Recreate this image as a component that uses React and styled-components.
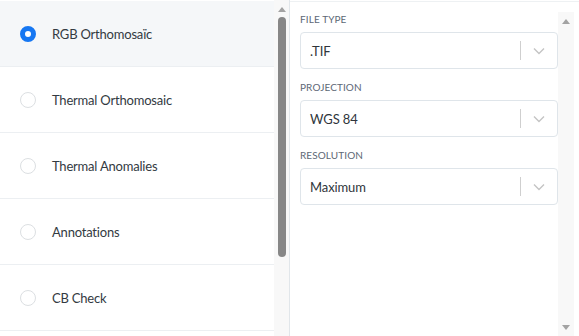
import React, { useState } from "react";
import styled, { createGlobalStyle } from "styled-components";

const GlobalStyle = createGlobalStyle`
  html, body {
    margin: 0;
    padding: 0;
    background: #ffffff;
    font-family: "Lato", "Open Sans", sans-serif;
  }
  * { box-sizing: border-box; }
`;

const Page = styled.div`
  display: flex;
  width: 579px;
  height: 336px;
  overflow: hidden;
  background: #fff;
`;

const LeftPane = styled.div`
  display: flex;
  width: 290px;
  border-right: 1px solid #e1e6ea;
`;

const List = styled.div`
  width: 274px;
  padding-top: 1px;
`;

const Row = styled.div`
  display: flex;
  align-items: center;
  height: 66px;
  padding-left: 20px;
  border-bottom: 1px solid #eceff2;
  background: ${p => (p.$active ? "#f5f7f9" : "#fff")};
  cursor: pointer;
`;

const Radio = styled.span`
  width: 16px;
  height: 16px;
  border-radius: 50%;
  flex-shrink: 0;
  background: #fff;
  border: ${p => (p.$checked ? "5px solid #1677f2" : "1px solid #dcdfe2")};
`;

const RowLabel = styled.span`
  margin-left: 16px;
  font-size: 13px;
  letter-spacing: -0.2px;
  color: #333a42;
`;

const Scrollbar = styled.div`
  display: flex;
  flex-direction: column;
  align-items: center;
  width: 15px;
  background: #f8f8f8;
`;

const ArrowUp = styled.span`
  width: 0;
  height: 0;
  border-left: 4px solid transparent;
  border-right: 4px solid transparent;
  border-bottom: 5px solid #a3a3a3;
  margin: 7px 0 5px;
`;

const ArrowDown = styled.span`
  width: 0;
  height: 0;
  border-left: 4px solid transparent;
  border-right: 4px solid transparent;
  border-top: 5px solid #a3a3a3;
  margin: 0 0 6px;
`;

const Thumb = styled.span`
  width: 8px;
  height: ${p => p.$h}px;
  border-radius: 4px;
  background: #878787;
`;

const Spacer = styled.span`
  flex: 1;
`;

const RightPane = styled.div`
  flex: 1;
  display: flex;
  border-top: 1px solid #eef1f3;
  margin-top: 1px;
`;

const Form = styled.div`
  width: 268px;
  padding: 11px 0 0 10px;
`;

const Field = styled.div`
  margin-bottom: 12px;
`;

const Label = styled.div`
  font-size: 10px;
  line-height: 13px;
  letter-spacing: 0.1px;
  color: #5d6875;
  margin-bottom: 6px;
`;

const Select = styled.div`
  display: flex;
  align-items: center;
  height: 37px;
  border: 1px solid #dfe5ea;
  border-radius: 4px;
  background: #fff;
`;

const Value = styled.span`
  flex: 1;
  padding-left: 9px;
  font-size: 13px;
  letter-spacing: -0.1px;
  color: #2f353b;
`;

const Sep = styled.span`
  width: 1px;
  height: 19px;
  background: #cfcfcf;
`;

const Chevron = styled.span`
  display: flex;
  align-items: center;
  justify-content: center;
  width: 36px;
`;

const RightScroll = styled(Scrollbar)`
  margin-top: 10px;
  width: 16px;
`;

const items = [
  "RGB Orthomosaïc",
  "Thermal Orthomosaic",
  "Thermal Anomalies",
  "Annotations",
  "CB Check",
];

const fields = [
  { label: "FILE TYPE", value: ".TIF" },
  { label: "PROJECTION", value: "WGS 84" },
  { label: "RESOLUTION", value: "Maximum" },
];

const App = () => {
  const [selected, setSelected] = useState(0);

  return (
    <>
      <GlobalStyle />
      <Page>
        <LeftPane>
          <List>
            {items.map((name, idx) => (
              <Row key={name} $active={idx === selected} onClick={() => setSelected(idx)}>
                <Radio $checked={idx === selected} />
                <RowLabel>{name}</RowLabel>
              </Row>
            ))}
          </List>
          <Scrollbar>
            <ArrowUp />
            <Thumb $h={240} />
          </Scrollbar>
        </LeftPane>
        <RightPane>
          <Form>
            {fields.map(f => (
              <Field key={f.label}>
                <Label>{f.label}</Label>
                <Select>
                  <Value>{f.value}</Value>
                  <Sep />
                  <Chevron>
                    <svg width="12" height="8" viewBox="0 0 12 8" fill="none">
                      <path d="M1 1.5l5 5 5-5" stroke="#c4c4c4" strokeWidth="1.4" />
                    </svg>
                  </Chevron>
                </Select>
              </Field>
            ))}
          </Form>
          <RightScroll>
            <ArrowUp />
            <Spacer />
            <ArrowDown />
          </RightScroll>
        </RightPane>
      </Page>
    </>
  );
};

export default App;
